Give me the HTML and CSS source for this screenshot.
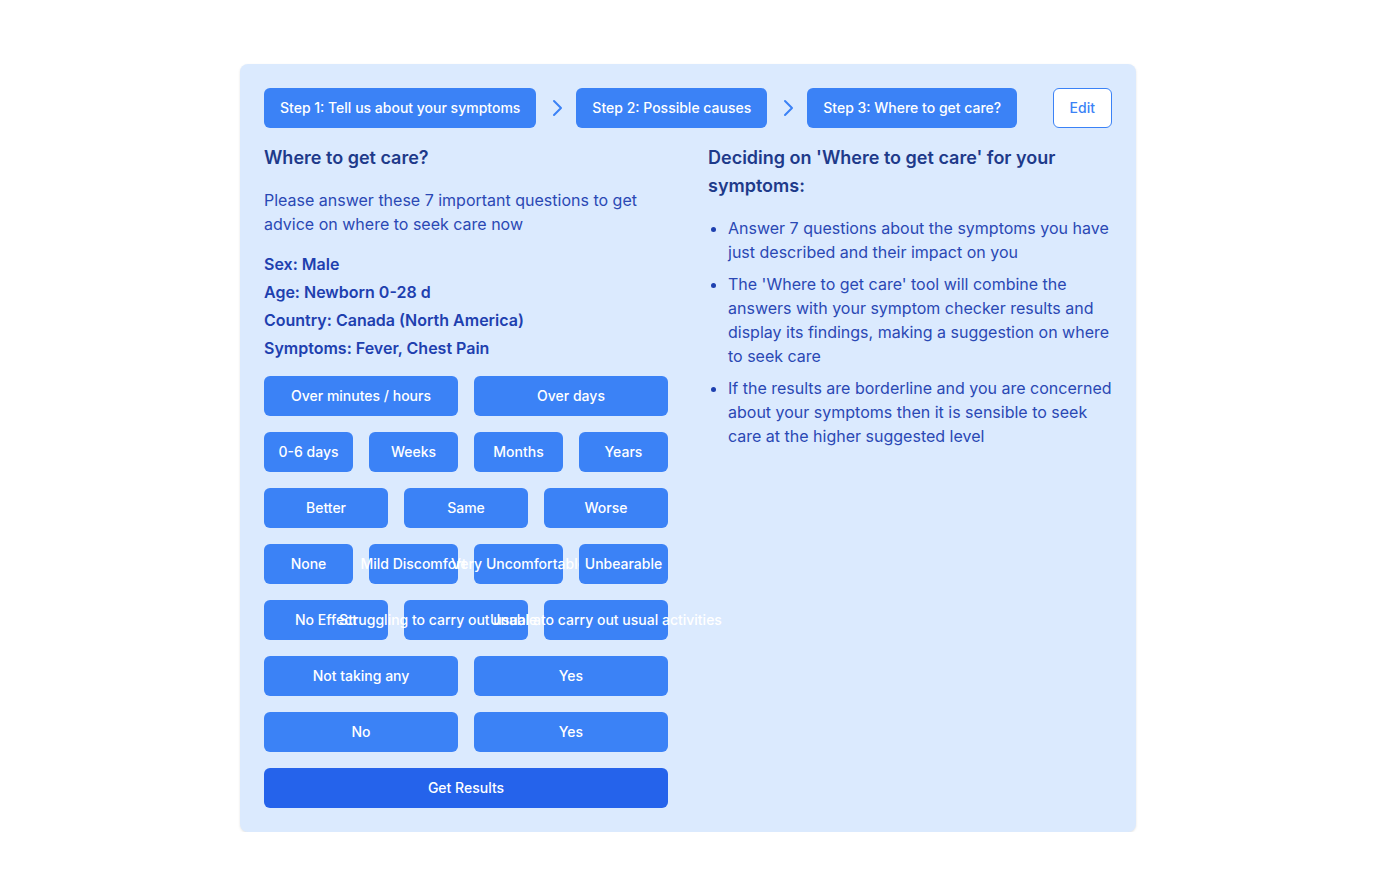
FILE: index.html
```html
<!DOCTYPE html>
<html lang="en">
<head>
<meta charset="utf-8">
<title>Where to get care?</title>
<link rel="stylesheet" href="styles.css">
</head>
<body>
<div class="card">
  <nav class="steps">
    <button class="step">Step 1: Tell us about your symptoms</button>
    <svg class="chev" width="24" height="24" viewBox="0 0 24 24" fill="none" stroke="currentColor" stroke-width="2" stroke-linecap="round" stroke-linejoin="round"><path d="M9 5l7 7-7 7"/></svg>
    <button class="step">Step 2: Possible causes</button>
    <svg class="chev" width="24" height="24" viewBox="0 0 24 24" fill="none" stroke="currentColor" stroke-width="2" stroke-linecap="round" stroke-linejoin="round"><path d="M9 5l7 7-7 7"/></svg>
    <button class="step">Step 3: Where to get care?</button>
    <button class="edit">Edit</button>
  </nav>
  <div class="cols">
    <section class="left">
      <h2 class="title">Where to get care?</h2>
      <p class="intro">Please answer these 7 important questions to get advice on where to seek care now</p>
      <div class="facts">
        <p>Sex: Male</p>
        <p>Age: Newborn 0-28 d</p>
        <p>Country: Canada (North America)</p>
        <p>Symptoms: Fever, Chest Pain</p>
      </div>
      <div class="answers">
        <div class="row two"><button class="opt">Over minutes / hours</button><button class="opt">Over days</button></div>
        <div class="row four"><button class="opt">0-6 days</button><button class="opt">Weeks</button><button class="opt">Months</button><button class="opt">Years</button></div>
        <div class="row three"><button class="opt">Better</button><button class="opt">Same</button><button class="opt">Worse</button></div>
        <div class="row four"><button class="opt">None</button><button class="opt">Mild Discomfort</button><button class="opt">Very Uncomfortable</button><button class="opt">Unbearable</button></div>
        <div class="row three"><button class="opt">No Effect</button><button class="opt">Struggling to carry out usual activities</button><button class="opt">Unable to carry out usual activities</button></div>
        <div class="row two"><button class="opt">Not taking any</button><button class="opt">Yes</button></div>
        <div class="row two"><button class="opt">No</button><button class="opt">Yes</button></div>
        <button class="opt submit">Get Results</button>
      </div>
    </section>
    <section class="right">
      <h2 class="title">Deciding on 'Where to get care' for your symptoms:</h2>
      <ul class="notes">
        <li>Answer 7 questions about the symptoms you have just described and their impact on you</li>
        <li>The 'Where to get care' tool will combine the answers with your symptom checker results and display its findings, making a suggestion on where to seek care</li>
        <li>If the results are borderline and you are concerned about your symptoms then it is sensible to seek care at the higher suggested level</li>
      </ul>
    </section>
  </div>
</div>
</body>
</html>
```
FILE: styles.css
```css
* { box-sizing: border-box; }
body {
  margin: 0;
  padding-top: 64px;
  background: #ffffff;
  font-family: Inter, "Noto Sans", sans-serif;
}
button { font-family: inherit; margin: 0; cursor: pointer; }
.card {
  width: 896px;
  margin: 0 auto;
  background: #dbeafe;
  border-radius: 8px;
  padding: 24px;
  box-shadow: 0 1px 3px rgba(0,0,0,0.08), 0 1px 2px rgba(0,0,0,0.04);
}
.steps {
  display: flex;
  align-items: center;
  gap: 8px;
  height: 40px;
}
.step {
  height: 40px;
  padding: 0 16px 2px;
  border: none;
  border-radius: 6px;
  background: #3b82f6;
  color: #fff;
  font-size: 14px;
  font-weight: 500;
  white-space: nowrap;
}
.chev { color: #3b82f6; flex: none; margin-left: 1px; margin-right: -1px; }
.edit {
  margin-left: auto;
  height: 40px;
  padding: 0 16px 2px;
  background: #fff;
  border: 1px solid #3b82f6;
  border-radius: 6px;
  color: #3b82f6;
  font-size: 14px;
  font-weight: 500;
}
.cols {
  display: grid;
  grid-template-columns: 404px 404px;
  column-gap: 40px;
  margin-top: 16px;
}
.title {
  margin: 0;
  font-size: 18px;
  line-height: 28px;
  font-weight: 600;
  color: #1e3a8a;
}
.intro {
  margin: 16px 0 0;
  font-size: 16px;
  line-height: 24px;
  color: #2a48b4;
}
.facts {
  margin-top: 16px;
  display: flex;
  flex-direction: column;
  gap: 4px;
}
.facts p {
  margin: 0;
  font-size: 16px;
  line-height: 24px;
  font-weight: 600;
  color: #1e40af;
}
.answers {
  margin-top: 16px;
  display: flex;
  flex-direction: column;
  gap: 16px;
}
.row {
  display: grid;
  gap: 16px;
}
.row.two { grid-template-columns: repeat(2, minmax(0, 1fr)); }
.row.three { grid-template-columns: repeat(3, minmax(0, 1fr)); }
.row.four { grid-template-columns: repeat(4, minmax(0, 1fr)); }
.opt {
  height: 40px;
  min-width: 0;
  display: flex;
  align-items: center;
  justify-content: center;
  white-space: nowrap;
  padding: 0 16px 2px;
  border: none;
  border-radius: 6px;
  background: #3b82f6;
  color: #fff;
  font-size: 14px;
  font-weight: 500;
}
.opt.submit { background: #2563eb; width: 100%; }
.notes {
  margin: 16px 0 0;
  padding-left: 20px;
  display: flex;
  flex-direction: column;
  gap: 8px;
}
.notes li {
  font-size: 16px;
  line-height: 24px;
  color: #2a48b4;
}
.notes li::marker { color: #1e40af; }
```
